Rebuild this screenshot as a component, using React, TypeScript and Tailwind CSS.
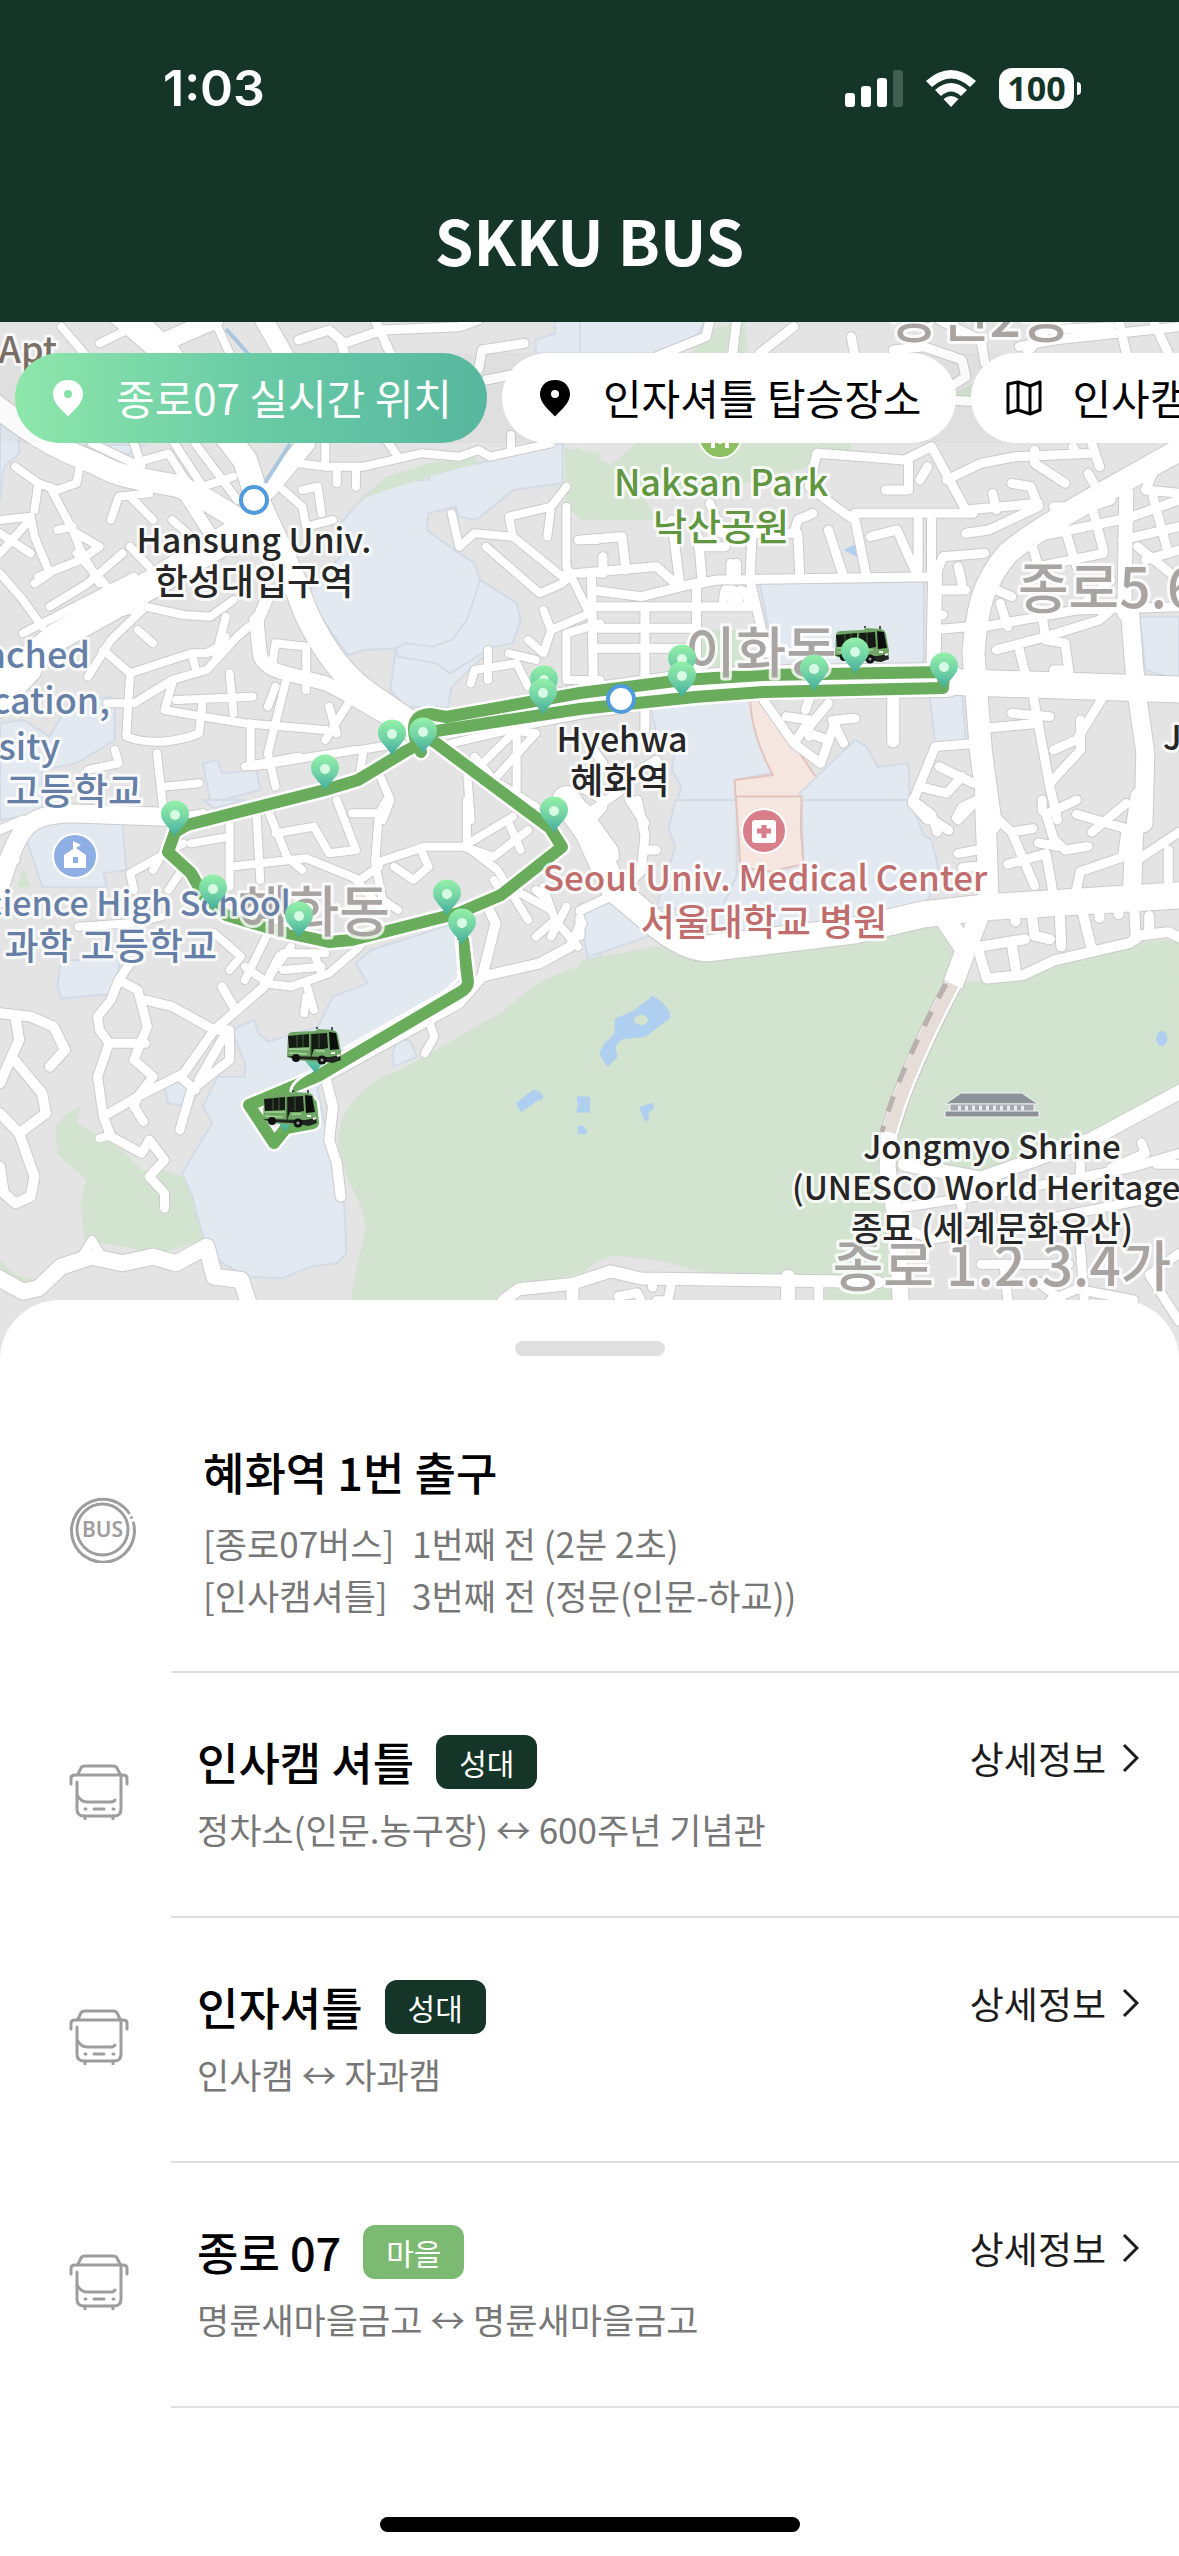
import { useState } from 'react';

type Tile = {
  id: string;
  transform: string;
  areas: { kind: keyof typeof AREA; d: string }[];
  roads: { w: number; d: string }[];
};

const AREA = {
  school: { fill: '#e2e9f1', stroke: '#d2dbe6' },
  park: { fill: '#d2e3cf', stroke: 'none' },
  water: { fill: '#aecfef', stroke: 'none' },
  hospital: { fill: '#f5e6df', stroke: '#e3c3bd' },
};

// base map, split in four tiles that each keep their own coordinate space
const TILES: Tile[] = [
  {
    id: 'nw',
    transform: 'translate(0 320) scale(0.3827 0.3333)',
    areas: [
      { kind: 'school', d: 'M1470 370 L1470 490 L1340 510 L1320 530 L1245 600 L1200 590 L1190 560 L1120 580 L1115 630 L1200 700 L1240 730 L1255 780 L1350 850 L1360 900 L1340 970 L1290 980 L1180 1100 L1170 1160 L1060 1160 L1020 1110 L1035 985 L950 990 L910 1005 C840 900 810 840 810 810 L890 710 L890 610 L950 530 L1010 480 L1120 480 L1130 450 L1250 430Z' },
      { kind: 'school', d: 'M1255 780 L1220 900 L1180 960 L1130 980 L1060 970 L1035 985 L1040 1010 L1140 1030 L1175 1060 L1290 980 L1340 970 L1360 900 L1350 850Z' },
      { kind: 'park', d: 'M890 600 L1010 470 L1120 430 L1240 410 L1250 430 L1120 470 L960 530Z' },
      { kind: 'park', d: 'M1475 385 L1568 400 V600 L1520 600 L1480 560Z' },
      { kind: 'school', d: 'M1400 60 L1450 40 L1450 0 H1568 V100 H1400Z' },
      { kind: 'school', d: 'M0 290 L50 340 L50 400 L10 440 L0 540Z' },
      { kind: 'school', d: 'M220 375 H380 L340 400 L270 420Z' },
      { kind: 'school', d: 'M130 1250 L180 1150 L290 1130 L300 1160 L300 1260 L200 1330 L110 1350 L110 1480 L0 1500 V1210 L60 1200Z' },
      { kind: 'school', d: 'M530 1330 L570 1320 L580 1360 L670 1350 L680 1410 L550 1450Z' },
    ],
    roads: [
      { w: 22, d: 'M-20 250 C60 320 130 380 250 430 C320 480 400 480 470 500 L540 540 L640 610' },
      { w: 24, d: 'M340 -10 L440 100 L560 300 L640 420 L680 560 L760 760 L800 880 C850 1000 900 1070 960 1120 L1100 1230' },
      { w: 28, d: 'M660 610 L400 790 L150 950 L-20 1110' },
      { w: 18, d: 'M420 70 L560 0 M690 0 L740 100 M800 370 L700 510' },
      { w: 14, d: 'M670 900 L680 1010 C700 1060 760 1060 850 1090 C930 1130 960 1170 1060 1220' },
      { w: 12, d: 'M470 500 L560 660 M700 830 L670 910 M-10 1180 L90 1060 L120 960' },
      { w: 8, d: 'M160 20 L220 100 M260 70 L350 20 M300 0 L400 100 M350 370 L370 440 M240 370 L350 430 L440 400 L490 490 M450 360 L530 500 L610 470 M510 370 L620 540 M600 360 L660 470 M560 0 L600 100' },
      { w: 8, d: 'M40 440 L100 490 L150 510 L200 490 L210 430 M100 490 L90 570 M130 500 L190 630 L210 690 L260 790 M150 630 L190 620 M290 600 L310 530 L390 520 M340 530 L400 600 M0 600 L80 590 L90 650 L130 760 L90 790 M0 640 L80 700 M0 760 L60 840 L110 920 M60 940 L350 770 M100 770 L210 720 L260 680 L200 640 M200 700 L320 850 M340 680 L390 740 M450 600 L500 650 M130 860 L230 790 L320 700 M0 700 L70 610' },
      { w: 8, d: 'M150 920 L380 860 L480 885 L550 890 L610 840 M380 860 L290 960 M590 890 L570 980 L540 1000 L500 1000 L340 1060 M590 950 L560 1000 M270 990 L340 1060 L330 1250 C400 1280 480 1260 520 1240 L530 1140 M290 960 L230 1070 M360 930 L400 970 M280 1150 L350 1150 L450 1080 L540 1050 L620 950 L650 920 M430 1170 L530 1190 L640 1210 L850 1230 M600 1060 L610 1180 M460 1140 L660 1130 M450 1090 L430 1170 M500 1000 L510 1040' },
      { w: 8, d: 'M720 970 L800 980 L800 1060 M720 970 L710 1040 M655 1210 L655 1340 L930 1290 M750 1070 L700 1300 L720 1400 M720 1100 L700 1160 M800 1060 V1110 M860 1160 L880 1240 M640 1340 L780 1310 M410 1300 L430 1500 L530 1480 M430 1400 L520 1390 M300 1290 L310 1330 L230 1350 M910 1150 L850 1260' },
      { w: 8, d: 'M780 430 L850 440 L950 440 L1100 400 L1200 410 L1250 390 L1280 410 L1440 370 M880 440 V490 M930 440 V500 M1010 360 L1040 410 M850 370 V440 M1335 345 V390 M740 510 L790 560 L800 620 L870 600 M790 510 L830 500 L840 580' },
      { w: 9, d: 'M780 60 L860 30 L900 70 L1000 30 L1200 20 L1250 0 M900 100 L890 60 M980 0 L1020 100 M1250 150 L1260 90 L1370 70 M1270 180 L1400 150' },
      { w: 8, d: 'M1480 500 L1440 560 L1330 590 L1340 650 L1240 640 L1200 680 L1180 580 M1440 560 L1430 650 M1270 680 L1350 760 L1410 820 L1470 790 M1340 650 L1480 780 M1480 560 L1480 740 L1540 880 L1440 930 L1420 870 M1480 760 H1568 M1440 930 L1420 1000 L1380 960 M1510 660 H1560 M1480 1070 V940 L1568 910 M1480 1080 H1568' },
      { w: 8, d: 'M1230 1090 L1240 1050 L1350 1030 L1380 1100 M1275 990 V1080 M1330 1000 L1400 1020 M1180 1270 L1330 1230 L1400 1240 M1340 1240 L1270 1320 M1240 1310 L1290 1380 L1400 1240 M1350 1240 V1440 M950 1290 L940 1360 M940 1290 L1050 1270 M990 1360 L1020 1440 L1000 1500 M1220 1350 L1230 1500 M1290 1380 L1400 1460' },
    ],
  },
  {
    id: 'ne',
    transform: 'translate(580 320) scale(0.382 0.3333)',
    areas: [
      { kind: 'park', d: 'M-10 380 L80 435 L150 370 L710 370 L710 390 L620 400 L600 440 L390 500 L170 540 L200 600 H0Z' },
      { kind: 'school', d: 'M0 0 H330 L300 60 L220 100 H0Z' },
      { kind: 'park', d: 'M340 30 L430 0 L440 100 H290Z' },
      { kind: 'school', d: 'M470 790 L900 785 V1040 L500 1050 L500 960Z' },
      { kind: 'park', d: 'M320 930 H430 V1040 H310Z' },
      { kind: 'school', d: 'M185 1160 L450 1140 L470 1250 L500 1360 L405 1380 L410 1510 H240 L265 1400 L240 1350 L250 1280 L200 1240Z' },
      { kind: 'hospital', d: 'M445 1140 H480 L620 1375 L575 1420 L580 1510 H410 L405 1380 L505 1365 Q450 1250 445 1140Z' },
      { kind: 'school', d: 'M620 1370 L720 1260 L750 1280 L780 1340 L860 1330 L865 1510 H580 L575 1420Z' },
      { kind: 'school', d: 'M915 1130 L1000 1120 L1010 1260 L930 1270Z' },
      { kind: 'school', d: 'M1465 890 H1568 V1080 L1480 1050Z' },
      { kind: 'water', d: 'M690 690 L725 670 V710Z' },
      { kind: 'park', d: 'M980 220 L1030 190 L1050 230 L1030 240Z' },
    ],
    roads: [
      { w: 22, d: 'M1600 370 C1400 500 1200 620 1120 700 C1060 780 1040 850 1030 1000 L1050 1300 L1075 1510' },
      { w: 26, d: 'M950 1085 L1600 1110' },
      { w: 34, d: 'M-160 1180 L0 1145 L280 1100 L560 1085 L960 1080' },
      { w: 18, d: 'M1440 880 L1455 1100 L1480 1300 L1475 1510' },
      { w: 14, d: 'M1430 520 L1425 880 M930 740 L925 1060' },
      { w: 9, d: 'M0 760 L200 740 L260 800 L360 780 L930 770 M30 760 L35 1090 M30 810 L160 830 L300 790 M40 860 H450 M30 925 H300 M40 985 H300 M170 860 V1070 M305 790 V1070 M450 650 L445 780 L490 1000 M375 840 L380 810 L400 810 L400 850 M415 840 L420 810 L440 820 L440 850' },
      { w: 9, d: 'M240 600 L260 780 M310 650 L320 790 M0 660 L110 650 L120 750 M60 710 V760 M340 550 L370 640 L440 650 M440 640 L560 640 L570 600 L610 580 M570 640 L575 760 M395 730 V780 M410 730 V780 M310 680 H380' },
      { w: 9, d: 'M600 500 L680 570 L720 600 L750 770 M650 630 L690 770 M760 650 L830 630 L880 760 M720 580 H1030 M620 400 L850 420 L920 380 L1010 570 L1200 550 M860 430 V510 H800 M890 480 L910 440 M620 400 L600 500 M885 600 V750 M920 600 V770 M940 740 L950 710 L1060 700' },
      { w: 9, d: 'M960 480 L1050 430 L1140 410 L1340 400 M1190 390 V430 L1270 490 M1130 490 L1180 500 L1200 560 L1070 630 L1010 640 M1080 520 L1090 570 M1290 380 L1300 400 M1340 370 L1360 440 M1330 460 L1350 500 M1500 460 L1480 510 L1568 520' },
      { w: 9, d: 'M710 50 L720 110 M470 100 L560 20 M400 100 L410 0 M200 110 L330 50 L340 0 M820 90 L900 80 L1000 120 L1010 170 L970 200 M940 180 L970 240 L1040 245 M1060 130 L1050 60 L940 0 M1150 80 L1240 60 L1568 20 M1410 0 L1430 100 M1500 0 L1540 100 M1170 100 L1220 30 L1390 20' },
      { w: 9, d: 'M990 740 L1000 790 M940 810 H1010 M930 885 H950 M920 930 L1020 920 M1060 920 L1300 870 L1568 860 M1090 810 L1130 830 M1100 850 L1120 920 M1210 890 L1220 960 L1270 970 L1280 1060 M1090 990 L1220 950 L1360 900 L1400 860 M1240 1050 H1280 M1150 990 L1170 1080 M1390 780 L1300 870' },
      { w: 9, d: 'M1180 660 L1200 740 L1370 700 M1270 630 L1300 740 M1340 560 L1370 690 M1200 650 L1410 600 M1420 660 L1568 620 M1420 600 L1568 540 M1500 530 L1540 700 M1460 680 L1568 780 M1480 450 L1490 510 M1240 560 L1340 560 L1390 540 M1480 720 L1568 690' },
      { w: 9, d: 'M1060 1225 L1200 1210 M1185 1120 L1230 1400 L1250 1500 M1130 1180 L1230 1190 M1240 1290 L1300 1260 L1370 1130 M1230 1390 L1310 1290 L1310 1200 M930 1280 L870 1450 L910 1500 M930 1280 L1040 1270 M940 1340 L1030 1390 M890 1400 L960 1420 L1000 1370 M990 1500 L1040 1440' },
      { w: 12, d: 'M820 1130 V1265' },
      { w: 9, d: 'M480 1140 L560 1270 L630 1330 L670 1200 L720 1195 M540 1190 L600 1200 L600 1250 M560 1270 L590 1220 M590 1170 L600 1140 M650 1150 L600 1220 M660 1200 L690 1270 M600 1240 L650 1260' },
      { w: 9, d: 'M10 1250 L60 1330 M0 1400 L60 1440 M170 1170 V1230 M90 1400 L200 1320 M130 1440 L170 1510 M10 1490 L120 1400' },
    ],
  },
  {
    id: 'sw',
    transform: 'translate(0 800) scale(0.3827 0.3333)',
    areas: [
      { kind: 'school', d: 'M90 60 L320 70 L330 210 L270 220 L280 260 H110 L70 120Z' },
      { kind: 'park', d: 'M60 205 L80 260 H45Z' },
      { kind: 'school', d: 'M160 480 H310 V580 L160 595 L150 560Z' },
      { kind: 'school', d: 'M530 0 H640 L560 25Z' },
      { kind: 'school', d: 'M605 690 L665 660 L675 700 L700 725 L830 680 L870 590 L960 550 L930 490 L970 450 L1190 370 L1210 560 L860 800 L830 870 L870 1100 L900 1220 L905 1360 L880 1390 L810 1400 L740 1435 L640 1430 L570 1380 L530 1310 L500 1180 L475 1120 L555 970 L530 920 L570 830 L640 830 L640 790Z' },
      { kind: 'school', d: 'M430 860 L480 840 L520 880 L490 920 L440 910Z' },
      { kind: 'school', d: 'M1040 720 H1070 L1090 770 L1030 800 L1025 760Z' },
      { kind: 'school', d: 'M1530 350 L1568 320 V470 L1535 480Z' },
      { kind: 'park', d: 'M210 920 L200 970 L320 1050 L370 1110 H430 L480 1130 L500 1190 L530 1320 L420 1360 L220 1320 L210 1210 L225 1140 L150 1060 L145 980 L170 945Z' },
      { kind: 'park', d: 'M1568 480 C1450 520 1400 540 1310 640 C1200 700 1100 790 1000 830 C900 900 880 980 885 1040 C900 1150 950 1200 955 1280 C950 1350 920 1400 910 1600 H1340 V1460 L1520 1420 L1568 1380Z' },
      { kind: 'park', d: 'M0 1380 L40 1425 L90 1440 L60 1470 L0 1450Z' },
      { kind: 'water', d: 'M1348 910 L1362 937 L1408 900 L1413 903 L1420 890 L1412 876 L1395 868Z' },
    ],
    roads: [
      { w: 16, d: 'M-10 1430 L60 1475 L100 1465 L160 1400 L240 1370 L320 1390 L400 1370 L460 1390 L540 1340 L560 1430 L630 1440 L650 1510' },
      { w: 18, d: 'M-10 300 C50 60 70 50 180 40 L430 50' },
      { w: 9, d: 'M0 90 L60 60 M0 180 L40 180 M310 540 L290 600 L255 650 L260 690 L285 730 L255 830 L270 950 L290 1010 L370 1060 L390 1020 L430 1080 L390 1130 L430 1180 V1225 M310 540 L360 570 L385 680 L350 780 L400 830 L360 890 L270 950 M285 730 H380 M340 490 L310 540' },
      { w: 9, d: 'M380 600 L450 620 L560 690 L600 690 V780 L500 870 L470 990 M560 690 L480 820 L360 890 M590 700 L520 840 M470 830 L510 870 M360 890 L350 920 L375 965 M560 690 L690 560 L730 470 M580 560 L610 620' },
      { w: 10, d: 'M0 640 L80 650 L140 680 L170 750 L130 800 M40 650 L50 720 L30 770 L0 850 M30 770 L110 880 L120 940 L50 1000 L0 940 M50 1000 L90 1130 L80 1190 L40 1210 L10 1180 L0 1100' },
      { w: 8, d: 'M260 1015 L290 1005 M218 1360 L240 1320 L262 1360' },
      { w: 10, d: 'M1270 310 L1295 370 L1260 530 L1200 610 L850 830 L870 920 L860 1020 L880 1090 L890 1190 M1260 530 L1410 490 L1490 440 L1520 370' },
      { w: 8, d: 'M1120 660 L1135 710 L1110 760 M205 380 L340 370 L420 350 M480 130 L340 220 L350 270 M400 210 L430 150' },
      { w: 8, d: 'M500 130 L600 110 M600 50 V260 M600 200 L800 175 L940 240 L990 200 M670 40 L680 240 M700 30 L750 170 L790 210 M820 80 L860 160 L930 150 L880 0 M720 100 L820 80 M920 40 H1000 M980 190 L990 40 L1010 0 M980 190 L1110 140 L1210 140 L1340 50 M980 190 L1000 300 L1040 330 M1220 0 V140 L1300 210 L1380 360 M1030 200 L1080 240 L1120 200 L1100 150 M440 270 L470 220 M930 240 L1000 330' },
      { w: 8, d: 'M1210 140 L1290 170 L1380 90 M1360 150 L1330 70 M1290 240 L1320 290 M1330 260 L1440 330 M1400 270 L1430 300 M1420 260 L1450 360 L1400 410 M1450 360 L1510 440 M1480 320 L1440 410' },
      { w: 28, d: 'M1480 0 L1580 160' },
      { w: 8, d: 'M560 400 L630 470 L600 510 M700 400 L640 540 M760 440 L690 550 L760 560 L860 520 L940 440 M740 460 L850 460 M740 510 L840 500 M820 460 L840 520 M800 550 L820 630 M800 590 L795 640 M640 500 L700 550' },
    ],
  },
  {
    id: 'se',
    transform: 'translate(580 800) scale(0.382 0.3571)',
    areas: [
      { kind: 'park', d: 'M0 450 L250 400 L320 440 L960 350 L1000 510 L1180 500 L1240 450 L1440 400 L1568 390 V810 L1330 940 L1060 1050 L840 1030 L790 1100 L830 1340 L350 1330 L210 1290 L90 1275 L0 1310Z' },
      { kind: 'park', d: 'M640 1360 H815 V1410 H640Z' },
      { kind: 'school', d: 'M0 330 V290 L100 270 L210 370 L20 440Z' },
      { kind: 'school', d: 'M250 0 H410 V320 L200 300 L250 130 L232 80Z' },
      { kind: 'school', d: 'M580 0 H865 L900 100 L920 110 L940 200 L900 310 L400 390 L350 350 L420 190 L585 180Z' },
      { kind: 'hospital', d: 'M408 -10 H580 L578 80 L585 180 L500 200 L420 190Z' },
      { kind: 'water', d: 'M190 548 Q240 580 235 612 Q200 640 170 664 L110 670 L92 690 L98 720 L72 748 L50 710 L65 680 L90 655 L92 612 L140 590Z' },
      { kind: 'water', d: 'M155 860 L190 848 L194 864 L178 876 L182 892 L170 902Z M1508 668 a15 21 0 1 0 30 0 a15 21 0 1 0 -30 0Z' },
      { kind: 'water', d: 'M-8 830 H26 V875 H-8 V860 L-4 852 L-8 845Z M-6 912 H12 V922 H18 V935 H-6Z' },
    ],
    roads: [
      { w: 26, d: 'M0 40 L90 250 L190 340 Q280 420 340 415 L720 365 L900 320 L1070 300 L1600 265' },
      { w: 20, d: 'M1060 -10 L1070 290 M1050 310 L1010 420 L975 520 M960 340 L1010 420' },
      { w: 18, d: 'M1465 -10 L1450 100 L1445 270' },
      { w: 16, d: 'M810 930 L805 1030 L830 1200 L840 1410' },
      { w: 14, d: 'M850 1020 L1050 1060 L1340 950 L1600 800' },
      { w: 10, d: 'M1040 410 L1065 500 L1160 490 L1240 450 L1440 400 L1460 380 L1540 370 L1600 400 M1050 410 L1165 390 M1130 400 L1140 470 M1180 300 L1190 380 L1230 390 M1255 300 L1260 410 M1310 290 L1340 420 M1360 280 V330 M1140 300 V340 M1450 290 L1455 390 M1490 325 L1490 370 M1410 290 V320' },
      { w: 9, d: 'M1080 40 L1130 90 L1185 80 M1130 90 L1190 240 M1120 180 L1220 150 L1240 270 M1200 120 L1250 130 M1300 0 L1220 40 L1240 110 L1270 140 L1330 130 M1210 0 V30 M1300 250 L1310 200 L1420 160 L1430 80 L1300 40 M1340 90 L1430 10 M1470 160 L1568 90 M1540 140 V250 M985 50 L1000 20 L1040 0 M870 0 L920 40 L935 90 M990 150 L1040 140 M1000 190 L1050 185 M930 60 L965 85' },
      { w: 9, d: 'M0 90 L60 20 M40 90 L90 160 M150 0 L170 100 L160 200 L120 240 M180 140 H200 M0 310 L100 260 M0 330 V380' },
      { w: 12, d: 'M-200 1402 L-160 1370 L-20 1355 L80 1320 L160 1340 L780 1350 M-20 1355 V1410' },
      { w: 14, d: 'M545 1335 V1410' },
      { w: 9, d: 'M625 1350 V1410 M190 1350 V1365 M240 1350 L230 1402 L200 1402 M100 1390 L150 1380 L160 1402' },
      { w: 9, d: 'M850 1140 L1100 1100 L1440 1030 L1568 990 M1000 1140 L990 1110 M1310 1090 V1020 M1510 1020 H1568 M1470 960 L1480 990 L1390 1030 M850 1200 L920 1230 L1140 1190 L1568 1100 M1050 1300 H1280 M1110 1300 L1120 1400 M1310 1250 L1320 1400 M1230 1402 L1300 1370 L1450 1400 M1568 1270 L1490 1330 L1568 1460 M1200 1350 L1260 1400' },
    ],
  },
];

const ROUTE = [
  'M421 752 L416 741 Q408 715 430 714 L446 717 L580 693 L683 680 L763 675 L944 672 L943 688 L763 692 L695 697 L580 709 L436 731',
  'M419 744 L406 751 L358 780 L325 790 L187 825 L175 832 L168 852 L191 873 L204 896 L226 915 L283 932 L329 942 L352 940 L459 913 L501 895 L562 847 L550 828 L436 743 L428 738',
  'M463 940 L468 982 Q468 988 459 993 L318 1076 L249 1105 L274 1143 L286 1128 L313 1123 L311 1104',
];

const PINS = [
  [544, 702], [543, 715], [392, 756], [423, 754], [325, 791], [175, 837], [554, 833], [213, 911],
  [299, 938], [447, 916], [462, 945], [315, 1074], [285, 1132], [682, 681], [682, 698], [814, 691], [944, 689],
];

type Label = { x: number; y: number; text: string; size: number; fill: string; anchor?: 'start' | 'middle' | 'end' };

const INK = '#262626';
const BLUE = '#667fa6';
const RED = '#bf6d6d';
const GREEN = '#5f963f';
const DISTRICT = '#a8a4a1';

const LABELS: Label[] = [
  { x: 980, y: 337, text: '창신2동', size: 55, fill: DISTRICT },
  { x: 1018, y: 608, text: '종로5.6가동', size: 55, fill: DISTRICT, anchor: 'start' },
  { x: 761, y: 672, text: '이화동', size: 55, fill: DISTRICT },
  { x: 314, y: 931, text: '혜화동', size: 55, fill: DISTRICT },
  { x: 1002, y: 1286, text: '종로 1.2.3.4가', size: 55, fill: DISTRICT },
  { x: 57, y: 363, text: 'Apt', size: 36, fill: '#7c6f68', anchor: 'end' },
  { x: 254, y: 553, text: 'Hansung Univ.', size: 34, fill: INK },
  { x: 254, y: 595, text: '한성대입구역', size: 36, fill: INK },
  { x: 721, y: 496, text: 'Naksan Park', size: 36, fill: GREEN },
  { x: 721, y: 541, text: '낙산공원', size: 37, fill: GREEN },
  { x: 90, y: 668, text: 'Attached', size: 36, fill: BLUE, anchor: 'end' },
  { x: 110, y: 714, text: 'Education,', size: 36, fill: BLUE, anchor: 'end' },
  { x: 60, y: 760, text: 'University', size: 36, fill: BLUE, anchor: 'end' },
  { x: 142, y: 805, text: '고등학교', size: 37, fill: BLUE, anchor: 'end' },
  { x: 291, y: 916, text: 'Science High School', size: 34, fill: BLUE, anchor: 'end' },
  { x: 217, y: 960, text: '과학 고등학교', size: 37, fill: BLUE, anchor: 'end' },
  { x: 622, y: 752, text: 'Hyehwa', size: 34, fill: INK },
  { x: 620, y: 794, text: '혜화역', size: 36, fill: INK },
  { x: 765, y: 891, text: 'Seoul Univ. Medical Center', size: 35, fill: RED },
  { x: 764, y: 936, text: '서울대학교 병원', size: 37, fill: RED },
  { x: 1163, y: 750, text: 'Jongno', size: 34, fill: INK, anchor: 'start' },
  { x: 992, y: 1159, text: 'Jongmyo Shrine', size: 33, fill: INK },
  { x: 992, y: 1200, text: '(UNESCO World Heritage)', size: 33, fill: INK },
  { x: 992, y: 1241, text: '종묘 (세계문화유산)', size: 34, fill: INK },
];

function StopPin({ x, y }: { x: number; y: number }) {
  return (
    <g transform={`translate(${x} ${y})`}>
      <path d="M0 0 C-4 -9 -14 -14 -14 -23 A14 13.5 0 0 1 14 -23 C14 -14 4 -9 0 0Z" fill="url(#pin)" />
      <circle cy="-22" r="5" fill="#d6fbe4" />
    </g>
  );
}

function BusMarker({ x, y }: { x: number; y: number }) {
  return (
    <g transform={`translate(${x} ${y})`}>
      <path d="M1 6 Q2 3 6 3 L28 2 L31 0 L46 1 Q50 2 51 6 L54 23 L53 31 L46 34 L8 31 L0 28Z" fill="#6fa565" />
      <path d="M1 7 L22 5 V18 L2 19Z" fill="#161a15" />
      <path d="M24 5 L40 4 L41 19 L36 20 L27 20 L24 29Z" fill="#161a15" />
      <path d="M42 3 L49 4 L52 20 L43 21Z" fill="#0c0e0c" />
      <path d="M2 20 L22 20 M2 24 L20 25 M29 22 L38 22" stroke="#a3d595" strokeWidth="1.5" />
      <path d="M24 5 V30 M10 6 V18 M16 6 V18 M32 5 V19" stroke="#3d5f38" strokeWidth="1" />
      <path d="M0 27 L8 30 L30 31 L46 34 L54 31 L53 26 L42 28Z" fill="#20251f" />
      <circle cx="9" cy="29" r="4" fill="#111" />
      <circle cx="35" cy="31" r="4.5" fill="#111" />
      <circle cx="35" cy="31" r="1.6" fill="#999" />
      <path d="M44 24 L48 24 M50 27 L53 26" stroke="#eee" strokeWidth="2" />
      <path d="M30 0 V-2 M45 1 V-2" stroke="#222" strokeWidth="1.5" />
    </g>
  );
}

function CampusMap() {
  return (
    <svg viewBox="0 322 1179 1038" className="block h-auto w-full bg-[#e4e4e4]" role="img" aria-label="map">
      <defs>
        <linearGradient id="pin" x1="0" y1="0" x2="0" y2="1">
          <stop offset="0" stopColor="#94f0a8" />
          <stop offset="0.5" stopColor="#72d3a5" />
          <stop offset="1" stopColor="#3fa99c" />
        </linearGradient>
      </defs>

      {TILES.map((t) => (
        <g key={t.id} transform={t.transform}>
          {t.areas.map((a, i) => (
            <path key={i} d={a.d} fill={AREA[a.kind].fill} stroke={AREA[a.kind].stroke} strokeWidth="2" vectorEffect="non-scaling-stroke" />
          ))}
        </g>
      ))}
      <ellipse cx="641" cy="1020" rx="7" ry="5" fill="#d2e3cf" />

      {/* casing first, so that crossings stay open */}
      {['#cbcbcb', '#ffffff'].map((color, pass) => (
        <g key={color} fill="none" stroke={color} strokeLinecap="round" strokeLinejoin="round">
          {TILES.map((t) => (
            <g key={t.id} transform={t.transform}>
              {t.roads.map((r, i) => (
                <path key={i} d={r.d} strokeWidth={pass === 0 ? r.w + 2 : r.w} vectorEffect="non-scaling-stroke" />
              ))}
            </g>
          ))}
        </g>
      ))}

      <path d="M226 329 L252 358 M290 444 L265 483" stroke="#a9c6de" strokeWidth="4" fill="none" />
      <path d="M953 984 Q905 1075 890 1132" stroke="#c4c4c4" strokeWidth="19" fill="none" />
      <path d="M953 984 Q905 1075 890 1132" stroke="#ffffff" strokeWidth="17" fill="none" />
      <path d="M952 984 Q904 1075 889 1132" stroke="#e6ddd8" strokeWidth="14" fill="none" />
      <path d="M946 984 Q897 1075 882 1132" stroke="#b9b1ad" strokeWidth="5" strokeDasharray="16 15" fill="none" />

      <g fill="none" stroke="#ffffff" strokeWidth="17" strokeLinejoin="round" strokeLinecap="round">
        {ROUTE.map((d) => <path key={d} d={d} />)}
      </g>
      <g fill="none" stroke="#68ac5c" strokeWidth="12" strokeLinejoin="round" strokeLinecap="round">
        {ROUTE.map((d) => <path key={d} d={d} />)}
      </g>
      <path d="M457 940 L459 978 L444 992 L343 1049 M312 1071 Q290 1082 291 1092" stroke="#ffffff" strokeWidth="3" fill="none" />

      <g fill="#ffffff" stroke="#4f9bdc" strokeWidth="4">
        <circle cx="254" cy="500" r="13" />
        <circle cx="621" cy="699" r="13" />
      </g>

      <circle cx="720" cy="437" r="21" fill="#8cc063" stroke="#ffffff" strokeWidth="2" />
      <path d="M713 448 V438 L720 442 L727 438 V448" stroke="#ffffff" strokeWidth="4" fill="none" />
      <circle cx="75" cy="856" r="22" fill="#8eafe3" stroke="#ffffff" strokeWidth="2" />
      <path d="M64 868 V855 L73 849 V841 L81 845 L76 848 L86 855 V868Z" fill="#ffffff" />
      <rect x="73" y="857" width="5" height="6" fill="#8eafe3" />
      <circle cx="764" cy="831" r="22" fill="#d87f89" stroke="#ffffff" strokeWidth="2" />
      <rect x="752" y="820" width="24" height="23" rx="3" fill="#ffffff" />
      <path d="M764 825 V838 M757 831 H771" stroke="#d87f89" strokeWidth="5" />

      <g stroke="#f2f2f2" strokeWidth="1">
        <path d="M945 1104 L961 1093 H1022 L1038 1104Z" fill="#8d9198" />
        <path d="M950 1104 H1034 V1112 H950Z" fill="#a3a7ae" />
        <path d="M945 1111 H1039 V1117 H945Z" fill="#8d9198" />
      </g>
      <path d="M958 1108 H1026" stroke="#e9eaec" strokeWidth="5" strokeDasharray="3 4" />

      <g
        fontFamily='"Noto Sans CJK KR", "Noto Sans", sans-serif'
        fontWeight="500"
        stroke="#ffffff"
        strokeOpacity="0.8"
        strokeWidth="6"
        strokeLinejoin="round"
        paintOrder="stroke"
      >
        {LABELS.map((l) => (
          <text key={l.text} x={l.x} y={l.y} fontSize={l.size} fill={l.fill} textAnchor={l.anchor ?? 'middle'}>
            {l.text}
          </text>
        ))}
      </g>

      {PINS.map(([x, y]) => <StopPin key={`${x}-${y}`} x={x} y={y} />)}
      <BusMarker x={287} y={1029} />
      <BusMarker x={263} y={1092} />
      <BusMarker x={835} y={628} />
      <StopPin x={855} y={674} />
    </svg>
  );
}

function PinIcon() {
  return (
    <svg viewBox="0 0 36 38" className="h-[38px] w-9" fill="currentColor">
      <path fillRule="evenodd" d="M18 1 C9 1 3 7 3 15.500 C3 24 12 31 18 37.500 C24 31 33 24 33 15.500 C33 7 27 1 18 1Z M18 11 a4 4 0 1 1 0 8 a4 4 0 1 1 0 -8Z" />
    </svg>
  );
}

function FoldedMapIcon() {
  return (
    <svg viewBox="0 0 36 38" className="h-[38px] w-9" fill="none" stroke="currentColor" strokeWidth="3" strokeLinejoin="round">
      <path d="M2 5 L12 3 L24 7 L34 3 V31 L24 35 L12 31 L2 34Z M12 3 V31 M24 7 V35" />
    </svg>
  );
}

function BusStopIcon() {
  return (
    <svg viewBox="0 0 67 67" className="size-[67px]" fill="none" stroke="#9d9d9d" strokeWidth="3" strokeLinecap="round">
      <path d="M60 17 A31.500 31.500 0 1 0 64.500 27" />
      <circle cx="33.500" cy="33.500" r="25.500" />
      <circle cx="62.500" cy="21.500" r="1.5" fill="#9d9d9d" stroke="none" />
      <text x="33.500" y="41" textAnchor="middle" fontSize="21" fontWeight="600" fontFamily='"Noto Sans", sans-serif' fill="#9d9d9d" stroke="none">
        BUS
      </text>
    </svg>
  );
}

function BusIcon() {
  return (
    <svg viewBox="0 0 60 56" className="h-14 w-[60px]" fill="none" stroke="#9d9d9d" strokeWidth="3" strokeLinecap="round" strokeLinejoin="round">
      <path d="M2 20 V14 Q2 11 6 11 H54 Q58 11 58 14 V20" />
      <path d="M9 10 L12 4 Q13 2 16 2 H44 Q47 2 48 4 L51 10" />
      <path d="M8 18 V45 Q8 52 15 52 H45 Q52 52 52 45 V12" />
      <path d="M8 31 Q12 38 18 38 H41 Q45 38 46 36" />
      <path d="M16 45 h1 M25 45 H35 M44 45 h1 M16 52 V55 M44 52 V55" />
    </svg>
  );
}

const CHIPS = [
  { label: '종로07 실시간 위치', icon: <PinIcon /> },
  { label: '인자셔틀 탑승장소', icon: <PinIcon /> },
  { label: '인사캠 건물지도', icon: <FoldedMapIcon /> },
];

const LINES = [
  { name: '인사캠 셔틀', tag: '성대', tagColor: 'bg-[#143528]', stops: '정차소(인문.농구장) ↔ 600주년 기념관' },
  { name: '인자셔틀', tag: '성대', tagColor: 'bg-[#143528]', stops: '인사캠 ↔ 자과캠' },
  { name: '종로 07', tag: '마을', tagColor: 'bg-[#7cb973]', stops: '명륜새마을금고 ↔ 명륜새마을금고' },
];

const ARRIVALS = [
  { bus: '[종로07버스]', info: '1번째 전 (2분 2초)' },
  { bus: '[인사캠셔틀]', info: '3번째 전 (정문(인문-하교))' },
];

export default function App() {
  const [active, setActive] = useState(0);

  return (
    <div className="flex min-h-screen flex-col overflow-hidden bg-white font-['Noto_Sans_CJK_KR','Noto_Sans',sans-serif] text-black">
      <header className="bg-[#143528] pb-7 text-white">
        <div className="flex h-44 items-center justify-between pr-[98px] pl-[163px]">
          <span className="font-['Inter',sans-serif] text-[50px] font-semibold">1:03</span>
          <div className="flex items-center gap-[22px]">
            <svg viewBox="0 0 58 38" className="h-[38px] w-[58px]" fill="currentColor">
              <rect y="24" width="10" height="14" rx="3" />
              <rect x="16" y="17" width="10" height="21" rx="3" />
              <rect x="32" y="9" width="10" height="29" rx="3" />
              <rect x="48" y="1" width="10" height="37" rx="3" opacity="0.2" />
            </svg>
            <svg viewBox="0 0 52 38" className="h-[38px] w-[52px]" fill="currentColor">
              <path d="M1 12 Q26 -10 51 12 L45 18 Q26 1 7 18Z" />
              <path d="M10 21 Q26 7 42 21 L36 27 Q26 18 16 27Z" />
              <path d="M18.500 30 Q26 24 33.500 30 L26 38Z" />
            </svg>
            <div className="flex items-center gap-[3px]">
              <span className="flex h-[41px] w-[75px] items-center justify-center rounded-[13px] bg-white font-['Open_Sans',sans-serif] text-[34px] leading-none font-bold text-[#143528]">
                100
              </span>
              <span className="h-[13px] w-1 rounded-r-full bg-white" />
            </div>
          </div>
        </div>
        <h1 className="pt-2 text-center text-[62px] leading-[110px] font-bold">SKKU BUS</h1>
      </header>

      <section className="relative">
        <CampusMap />
        <nav className="absolute inset-x-0 top-[31px] flex gap-[15px] overflow-hidden bg-black/[0.02] pl-[15px]">
          {CHIPS.map((chip, i) => (
            <button
              key={chip.label}
              onClick={() => setActive(i)}
              className={`flex h-[90px] shrink-0 items-center gap-[30px] rounded-full px-[35px] text-[42px] leading-[60px] ${
                active === i ? 'bg-linear-to-r from-[#8ee7aa] via-[#6acba6] to-[#56b79e] text-white' : 'bg-white text-black'
              }`}
            >
              {chip.icon}
              <span className="pb-[3px]">{chip.label}</span>
            </button>
          ))}
        </nav>
      </section>

      <main className="relative -mt-[60px] flex flex-1 flex-col rounded-t-[60px] bg-white pt-[41px]">
        <div className="mx-auto h-[15px] w-[150px] rounded-full bg-[#dfdfdf]" />

        <section className="flex">
          <div className="w-[171px] shrink-0 pt-[140px] pl-[69px]">
            <BusStopIcon />
          </div>
          <div className="flex-1 border-b-2 border-[#dfdfdf] pt-[86px] pb-[50px] pl-8">
            <h2 className="mb-[15px] text-[45px] leading-[60px] font-medium">혜화역 1번 출구</h2>
            {ARRIVALS.map((a) => (
              <p key={a.bus} className="flex text-[35px] leading-[52px] text-[#777777]">
                <span className="w-[209px]">{a.bus}</span>
                <span>{a.info}</span>
              </p>
            ))}
          </div>
        </section>

        <ul>
          {LINES.map((line) => (
            <li key={line.name} className="flex">
              <div className="w-[171px] shrink-0 pt-[91px] pl-[69px]">
                <BusIcon />
              </div>
              <div className="flex flex-1 items-start justify-between border-b-2 border-[#dfdfdf] pt-[62px] pr-10 pb-[62px] pl-[26px]">
                <div>
                  <div className="flex items-center gap-[22px]">
                    <h2 className="text-[45px] leading-[54px] font-medium">{line.name}</h2>
                    <span className={`rounded-xl px-[23px] text-[30px] leading-[54px] text-white ${line.tagColor}`}>{line.tag}</span>
                  </div>
                  <p className="mt-[15px] text-[35px] leading-[50px] text-[#777777]">{line.stops}</p>
                </div>
                <a href="#detail" className="flex items-center gap-4 text-[37px] leading-[46px] text-[#1c1c1c]">
                  상세정보
                  <svg viewBox="0 0 17 30" className="h-[30px] w-[17px]" fill="none" stroke="currentColor" strokeWidth="3">
                    <path d="M2 2 L15 15 L2 28" />
                  </svg>
                </a>
              </div>
            </li>
          ))}
        </ul>

        <div className="mx-auto mt-auto mb-6 h-[15px] w-[420px] rounded-full bg-black" />
      </main>
    </div>
  );
}
